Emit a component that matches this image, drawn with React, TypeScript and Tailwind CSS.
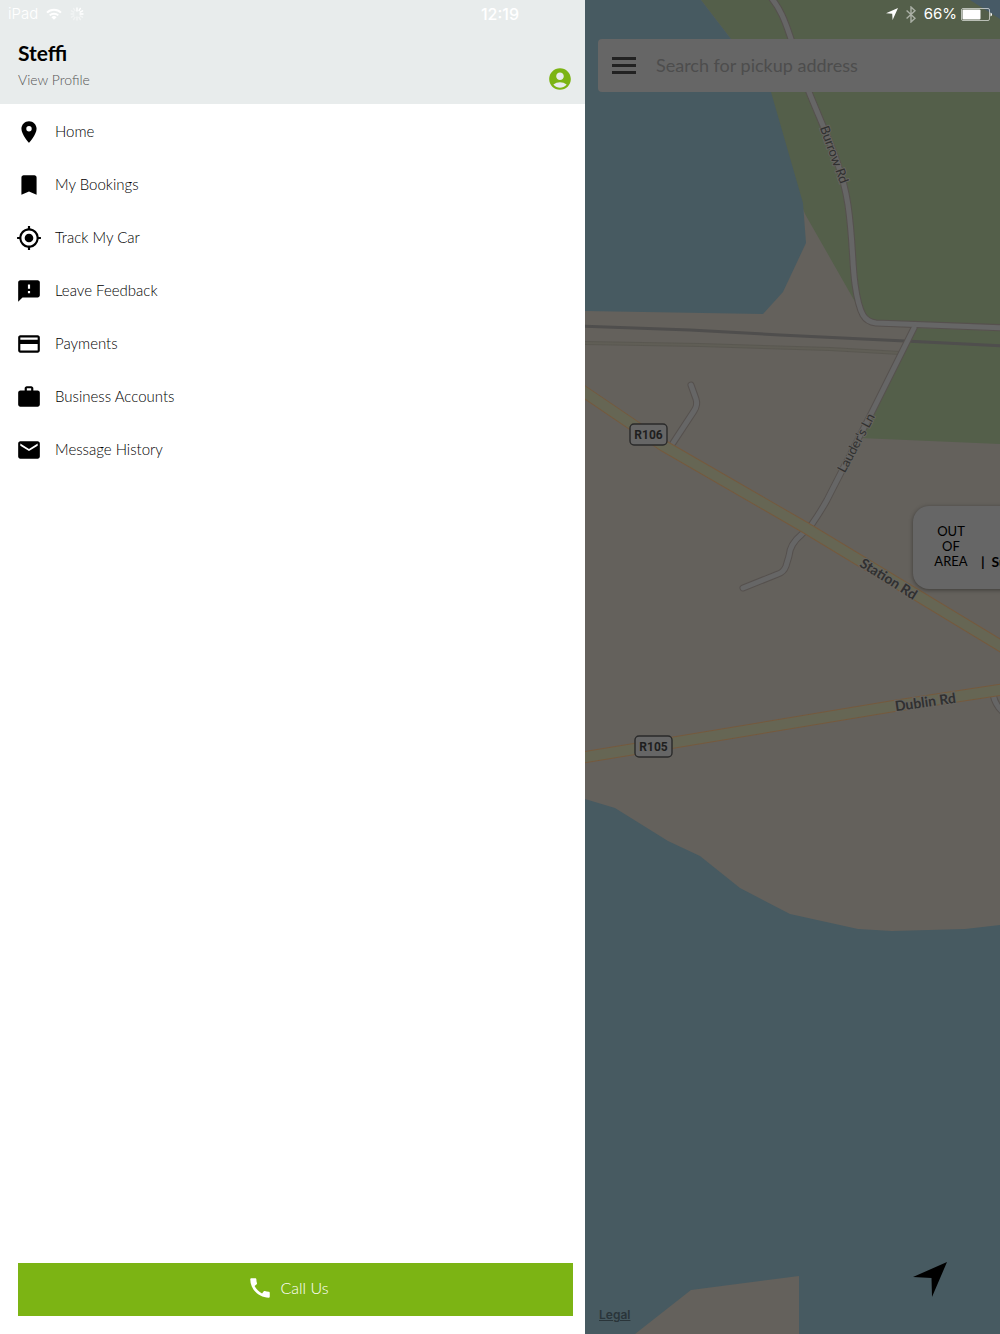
import { useState } from 'react';
import {
	MdAccountCircle,
	MdBookmark,
	MdCall,
	MdEmail,
	MdFeedback,
	MdMyLocation,
	MdPayment,
	MdPlace,
	MdWork,
} from 'react-icons/md';

const menuItems = [
	{ label: 'Home', icon: MdPlace },
	{ label: 'My Bookings', icon: MdBookmark },
	{ label: 'Track My Car', icon: MdMyLocation },
	{ label: 'Leave Feedback', icon: MdFeedback },
	{ label: 'Payments', icon: MdPayment },
	{ label: 'Business Accounts', icon: MdWork },
	{ label: 'Message History', icon: MdEmail },
];

const smallRoads = [
	'M768 -6 C781 8 786 24 791 39 L809 92 C825 132 842 165 848 205 C853 240 852 262 855 284 Q858 306 863 315 Q867 322 876 323 L1010 328',
	'M914 328 L872 412 L827 500 Q821 511 812 524 L801 535 Q790 544 789 556 L786 566 Q784 572 778 574 L743 588',
	'M691 385 L696 399 Q698 405 694 411 L673 443',
	'M993 694 Q995 705 1003 712',
];

const mainRoads = [
	'M580 389 L664 446 L806 528 L1006 649',
	'M580 758 L671 743 L894 706 L1006 689',
];

function StatusBar() {
	return (
		<div className="absolute inset-x-0 top-0 z-10 grid h-7 grid-cols-3 items-center px-2 font-['Inter',sans-serif] text-[15px] text-white">
			<div className="flex items-center gap-2">
				<span className="font-light">iPad</span>
				<svg width="16" height="12" viewBox="0 0 16 12" fill="none" stroke="currentColor" strokeWidth="2">
					<path d="M1 4.6a10 10 0 0 1 14 0" />
					<path d="M3.7 7.4a6.2 6.2 0 0 1 8.6 0" />
					<path d="M8 11.8 5.4 9.2a3.7 3.7 0 0 1 5.2 0z" fill="currentColor" stroke="none" />
				</svg>
				<svg width="14" height="14" viewBox="0 0 14 14" stroke="currentColor" strokeWidth="1.4" strokeLinecap="round">
					<path d="M7 1v3M9 3.6 10.4 1.4M10.2 5.2l2.4-1.4M10 7h3" />
					<path d="M10.2 8.8l2.4 1.4M9 10.4l1.4 2.2M7 10v3" opacity=".5" />
					<path d="M5 10.4 3.6 12.6M3.8 8.8l-2.4 1.4M4 7H1M3.8 5.2 1.4 3.8M5 3.6 3.6 1.4" opacity=".4" />
				</svg>
			</div>
			<span className="text-center text-base font-medium">12:19</span>
			<div className="flex items-center justify-end">
				<svg width="12" height="12" viewBox="0 0 12 12" fill="currentColor" className="mr-2">
					<path d="M12 0 6.6 12 6.2 5.8 0 5.3z" />
				</svg>
				<svg width="10" height="17" viewBox="0 0 10 17" fill="none" stroke="currentColor" strokeWidth="1.4" opacity=".5" className="mr-2">
					<path d="M.6 4.6 9 12.2 5 16V1l4 3.8-8.4 7.6" />
				</svg>
				<span>66%</span>
				<svg width="31" height="13" viewBox="0 0 31 13" className="ml-1">
					<rect x=".5" y=".5" width="28" height="12" rx="1.5" fill="none" stroke="#fff" opacity=".6" />
					<rect x="1.5" y="1.5" width="18" height="10" rx="1" fill="#fff" />
					<path d="M29.5 4.5q1.5 .4 1.5 2t-1.5 2z" fill="#fff" />
				</svg>
			</div>
		</div>
	);
}

function RoadSign({ x, y, label }: { x: number; y: number; label: string }) {
	return (
		<g>
			<rect x={x} y={y} width="37" height="21" rx="4" fill="#666" stroke="#2a2a2a" strokeWidth="1.4" />
			<text x={x + 18.5} y={y + 15} textAnchor="middle" fontSize="12" fontWeight="700" fill="#1f1f1f" className="font-['Liberation_Sans_Narrow','Roboto',sans-serif]">
				{label}
			</text>
		</g>
	);
}

function MapBackground() {
	return (
		<svg
			className="absolute inset-0 h-full w-full"
			viewBox="585 0 415 1334"
			preserveAspectRatio="xMinYMin slice"
			aria-hidden="true">
			<rect x="585" width="415" height="1334" fill="#64615c" />
			{/* parks */}
			<path d="M701 0H1000V328L872 323L862 314L805 214L760 92L731 39z" fill="#545f4a" />
			<path d="M915 328L1000 331V444L860 438z" fill="#545f4a" />
			{/* water */}
			<path d="M585 0H701L731 39L771 92L803 203L806 243L783 292L763 314L585 311z" fill="#475a61" />
			<path d="M970 0H1000V19z" fill="#475a66" />
			<path
				d="M585 799L615 808L668 841L700 856L740 888L790 914L858 929L892 931L965 929L1000 925V1334H799V1276L691 1290L635 1334H585z"
				fill="#475a61"
			/>
			{/* railway */}
			<g fill="none">
				<path d="M580 326L690 330L780 335L905 341L1006 346" stroke="#4f4e4d" strokeWidth="3" />
				<path d="M580 343L700 345L830 349L900 353" stroke="#5a5851" strokeWidth="4" />
				<path d="M580 343L700 345L830 349L900 353" stroke="#605e56" strokeWidth="2" />
			</g>
			<g fill="none" strokeLinecap="round" strokeLinejoin="round">
				{smallRoads.map(d => (
					<path key={d} d={d} stroke="#56514e" strokeWidth="7" />
				))}
				{smallRoads.map(d => (
					<path key={d} d={d} stroke="#666" strokeWidth="5" />
				))}
				{mainRoads.map(d => (
					<path key={d} d={d} stroke="#755a3e" strokeWidth="12" />
				))}
				{mainRoads.map(d => (
					<path key={d} d={d} stroke="#666654" strokeWidth="10" />
				))}
			</g>
			<g
				className="font-['Lato',sans-serif]"
				fontSize="13"
				fill="#303030"
				stroke="#666460"
				strokeWidth="2"
				paintOrder="stroke"
				textAnchor="middle">
				<text transform="translate(830 156) rotate(70)">Burrow Rd</text>
				<text transform="translate(860 445) rotate(-62)">Lauder's Ln</text>
				<text transform="translate(886 583) rotate(32)" fontSize="14" fontWeight="700">
					Station Rd
				</text>
				<text transform="translate(926 707) rotate(-8)" fontSize="14" fontWeight="700">
					Dublin Rd
				</text>
			</g>
			<RoadSign x={630} y={424} label="R106" />
			<RoadSign x={635} y={736} label="R105" />
		</svg>
	);
}

export default function App() {
	const [active, setActive] = useState('Home');
	const [pickup, setPickup] = useState('');

	return (
		<div className="relative flex min-h-screen w-full overflow-hidden bg-white font-['Lato',sans-serif] text-black">
			<StatusBar />
			<aside className="flex w-[58.5%] flex-col bg-white">
				<header className="flex items-end justify-between bg-[#e8ecec] pb-3 pl-[18px] pr-3 pt-[38px]">
					<div className="flex flex-col">
						<h1 className="text-[21px] font-bold leading-[30px]">Steffi</h1>
						<a href="#profile" className="text-sm font-light leading-6 text-[#555]">
							View Profile
						</a>
					</div>
					<button aria-label="Profile">
						<MdAccountCircle size={26} color="#7cb414" />
					</button>
				</header>
				<nav className="pt-px">
					<ul>
						{menuItems.map(({ label, icon: Icon }) => (
							<li key={label}>
								<a
									href="#menu"
									aria-current={active === label ? 'page' : undefined}
									onClick={() => setActive(label)}
									className="flex h-[53px] items-center gap-[13px] pl-4 text-[15px] font-light">
									<Icon size={26} />
									{label}
								</a>
							</li>
						))}
					</ul>
				</nav>
				<button className="mb-[18px] ml-[18px] mr-3 mt-auto flex h-[53px] items-center justify-center gap-2 bg-[#7cb414] pb-1 pr-4 text-base font-light text-white">
					<MdCall size={26} />
					Call Us
				</button>
			</aside>
			<main className="relative flex flex-1 flex-col overflow-hidden bg-[#64615c]">
				<MapBackground />
				<div className="relative ml-[13px] mt-[39px] flex h-[53px] items-center gap-5 rounded-l-sm bg-[#666] pl-[14px]">
					<button aria-label="Menu" className="flex w-6 flex-col gap-1">
						<span className="h-[3px] bg-[#222]" />
						<span className="h-[3px] bg-[#222]" />
						<span className="h-[3px] bg-[#222]" />
					</button>
					<input
						type="text"
						aria-label="Pickup address"
						placeholder="Search for pickup address"
						className="min-w-0 flex-1 bg-transparent pb-0.5 text-lg outline-none placeholder:text-[#4d4d4d]"
						value={pickup}
						onChange={e => setPickup(e.target.value)}
					/>
				</div>
				<div className="absolute left-[328px] top-[506px] flex h-[83px] w-60 items-center gap-3 rounded-2xl bg-[#666] pb-0.5 pl-5 shadow-[0_1px_4px_rgba(0,0,0,0.4)]">
					<p className="w-9 text-center text-[13px] leading-[15px]">
						OUT
						<br />
						OF
						<br />
						AREA
					</p>
					<p className="whitespace-nowrap pt-[30px] text-sm font-bold leading-[15px]">
						|&nbsp; Su
					</p>
				</div>
				<div className="relative mt-auto flex items-end justify-between pb-3 pl-[14px] pr-[52px]">
					<a href="#legal" className="font-['Inter',sans-serif] text-xs font-semibold leading-[14px] text-[#2a353a] underline">
						Legal
					</a>
					<button aria-label="My location" className="pb-6">
						<svg width="35" height="36" viewBox="0 0 35 36">
							<path d="M34 0 19 35 18.5 16 0 15z" />
						</svg>
					</button>
				</div>
			</main>
		</div>
	);
}
